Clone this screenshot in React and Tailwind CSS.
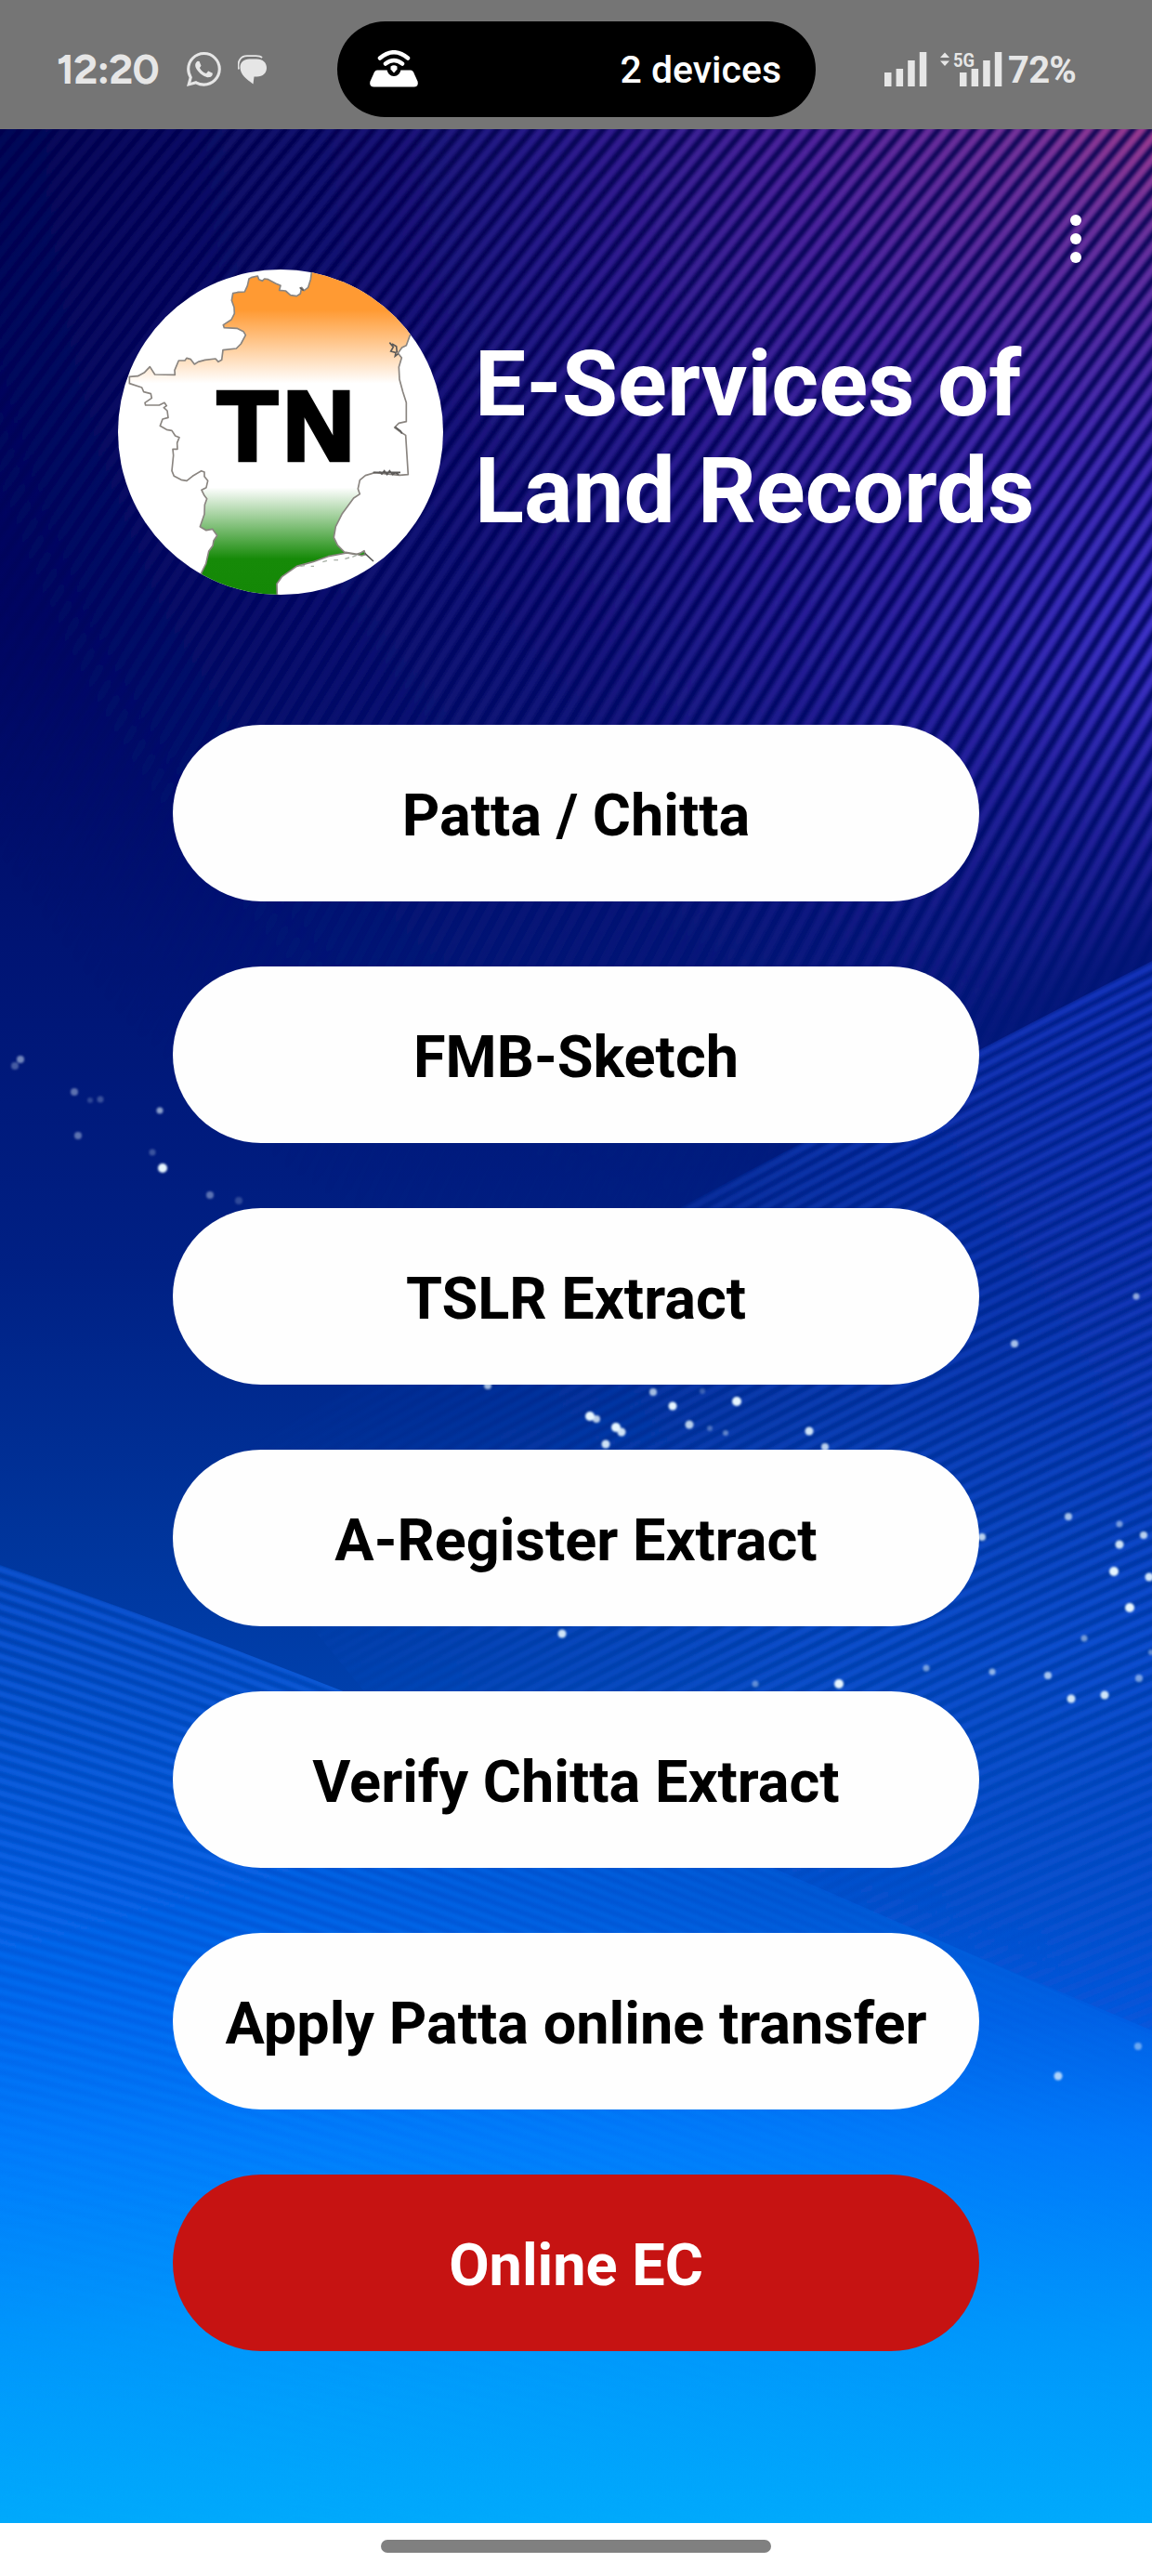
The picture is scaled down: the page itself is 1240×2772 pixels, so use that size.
import React from "react";
import { BsWhatsapp } from "react-icons/bs";

const services = [
  "Patta / Chitta",
  "FMB-Sketch",
  "TSLR Extract",
  "A-Register Extract",
  "Verify Chitta Extract",
  "Apply Patta online transfer",
];

// x, y, radius, opacity
const sparkles = [
  [703, 1498, 4, 0.7], [724, 1513, 4.5, 1], [793, 1508, 5, 1], [635, 1524, 5, 1], [642, 1527, 4, 0.8],
  [663, 1536, 5, 1], [669, 1541, 4.5, 0.9], [652, 1554, 4.5, 0.9], [742, 1533, 4.5, 0.8], [764, 1537, 3, 0.3],
  [781, 1542, 3, 0.4], [871, 1540, 4.5, 0.9], [888, 1557, 4, 0.8], [756, 1497, 3, 0.25], [1150, 1632, 4, 0.7],
  [1205, 1640, 3.5, 0.5], [1205, 1662, 4.5, 0.9], [1231, 1652, 4, 0.8], [1199, 1691, 5, 1], [1237, 1697, 4.5, 0.9],
  [1216, 1730, 5, 1], [1167, 1763, 3.5, 0.5], [1057, 1654, 4, 0.8], [605, 1758, 4.5, 0.9], [997, 1795, 3.5, 0.5],
  [1068, 1799, 3.5, 0.6], [1128, 1803, 4, 0.7], [1226, 1806, 4, 0.5], [1153, 1828, 4.5, 0.9], [1189, 1824, 4.5, 0.9],
  [903, 1812, 5, 1], [813, 1812, 3.5, 0.4], [525, 1491, 4, 0.7], [1092, 1446, 4, 0.7], [1223, 1395, 3.5, 0.6],
  [22, 1140, 4, 0.5], [16, 1147, 4, 0.3], [80, 1175, 4, 0.4], [97, 1184, 3, 0.2], [108, 1183, 3.5, 0.25],
  [172, 1195, 3.5, 0.6], [84, 1222, 4, 0.4], [164, 1240, 3.5, 0.25], [175, 1257, 5, 1], [226, 1286, 4, 0.4],
  [257, 1292, 4, 0.2], [1139, 2234, 4.5, 0.75], [1225, 2202, 4, 0.45], [1239, 1778, 3, 0.4],
];

const range = (n) => Array.from({ length: n }, (_, i) => i);

const steepLines = range(118)
  .map((i) => `M${10 + i * 19} 120 Q${-330 + i * 19} 520 ${-586 + i * 19} 1000 T${-760 + i * 19} 1400`)
  .join("");
const risingLines = range(92)
  .map((i) => `M1260 ${1030 + i * 14.6} Q840 ${1240 + i * 14.6 - i * 0.6} 200 ${1600 + i * 14.6 - i * 1.4}`)
  .join("");
const fallingLines = range(86)
  .map((i) => `M-20 ${1682 + i * 13.4} Q500 ${1855 + i * 13.4 - i * 1.2} 1260 ${2186 + i * 13.4 - i * 3}`)
  .join("");

function Backdrop() {
  return (
    <svg className="absolute inset-0 h-full w-full" viewBox="0 139 1240 2576" preserveAspectRatio="none" aria-hidden="true">
      <defs>
        <linearGradient id="base" gradientUnits="userSpaceOnUse" x1="0" y1="139" x2="0" y2="2715">
          <stop offset="0" stopColor="#00004c" />
          <stop offset="0.2" stopColor="#00065e" />
          <stop offset="0.34" stopColor="#001474" />
          <stop offset="0.475" stopColor="#002084" />
          <stop offset="0.59" stopColor="#00359c" />
          <stop offset="0.66" stopColor="#0041ae" />
          <stop offset="0.74" stopColor="#004ec8" />
          <stop offset="0.79" stopColor="#005ee4" />
          <stop offset="0.84" stopColor="#0078fa" />
          <stop offset="0.92" stopColor="#0096fb" />
          <stop offset="1" stopColor="#00aafc" />
        </linearGradient>
        <radialGradient id="steep" gradientUnits="userSpaceOnUse" cx="1260" cy="110" r="1500">
          <stop offset="0" stopColor="#b8408a" />
          <stop offset="0.1" stopColor="#80349a" />
          <stop offset="0.26" stopColor="#50249e" />
          <stop offset="0.45" stopColor="#33219c" stopOpacity="0.8" />
          <stop offset="0.62" stopColor="#22208e" stopOpacity="0.55" />
          <stop offset="0.8" stopColor="#141c80" stopOpacity="0.3" />
          <stop offset="1" stopColor="#101878" stopOpacity="0" />
        </radialGradient>
        <radialGradient id="violet" gradientUnits="userSpaceOnUse" cx="1260" cy="680" r="620">
          <stop offset="0" stopColor="#4038d4" stopOpacity="0.85" />
          <stop offset="0.5" stopColor="#2c28b4" stopOpacity="0.4" />
          <stop offset="1" stopColor="#2020a0" stopOpacity="0" />
        </radialGradient>
        <linearGradient id="fadeSteep" gradientUnits="userSpaceOnUse" x1="0" y1="139" x2="0" y2="1340">
          <stop offset="0" stopColor="#fff" />
          <stop offset="0.5" stopColor="#fff" />
          <stop offset="0.72" stopColor="#fff" stopOpacity="0.75" />
          <stop offset="1" stopColor="#fff" stopOpacity="0" />
        </linearGradient>
        <mask id="maskSteep" maskUnits="userSpaceOnUse" x="0" y="100" width="1240" height="1400">
          <rect x="0" y="100" width="1240" height="1400" fill="url(#fadeSteep)" />
          <path d="M1300 960 L780 1300 L780 1500 L1300 1500Z" fill="#000" filter="url(#edge)" />
        </mask>
        <filter id="edge" x="-20%" y="-20%" width="140%" height="140%"><feGaussianBlur stdDeviation="35" /></filter>
        <linearGradient id="rising" gradientUnits="userSpaceOnUse" x1="1240" y1="1200" x2="420" y2="1700">
          <stop offset="0" stopColor="#1c3ccc" stopOpacity="0.8" />
          <stop offset="0.5" stopColor="#1450d0" stopOpacity="0.4" />
          <stop offset="1" stopColor="#1050d0" stopOpacity="0.1" />
        </linearGradient>
        <linearGradient id="risingLow" gradientUnits="userSpaceOnUse" x1="0" y1="1400" x2="0" y2="2150">
          <stop offset="0" stopColor="#1060f0" stopOpacity="0" />
          <stop offset="0.5" stopColor="#1064f4" stopOpacity="0.4" />
          <stop offset="1" stopColor="#1070f4" stopOpacity="0" />
        </linearGradient>
        <linearGradient id="risingFill" gradientUnits="userSpaceOnUse" x1="1240" y1="1500" x2="640" y2="1700">
          <stop offset="0" stopColor="#0030b8" stopOpacity="0.2" />
          <stop offset="1" stopColor="#0034b8" stopOpacity="0" />
        </linearGradient>
        <linearGradient id="fadeRising" gradientUnits="userSpaceOnUse" x1="260" y1="0" x2="860" y2="0">
          <stop offset="0" stopColor="#fff" stopOpacity="0" />
          <stop offset="0.5" stopColor="#fff" stopOpacity="0.6" />
          <stop offset="1" stopColor="#fff" />
        </linearGradient>
        <mask id="maskRising" maskUnits="userSpaceOnUse" x="0" y="1000" width="1240" height="1200">
          <path d="M1240 1034 Q840 1238 200 1585 L400 1830 L1240 2185Z" fill="url(#fadeRising)" />
        </mask>
        <linearGradient id="falling" gradientUnits="userSpaceOnUse" x1="100" y1="1700" x2="350" y2="2600">
          <stop offset="0" stopColor="#1068f4" stopOpacity="0.6" />
          <stop offset="0.5" stopColor="#0c7cff" stopOpacity="0.5" />
          <stop offset="1" stopColor="#08a4ff" stopOpacity="0.25" />
        </linearGradient>
        <linearGradient id="fallingFill" gradientUnits="userSpaceOnUse" x1="0" y1="1690" x2="0" y2="2400">
          <stop offset="0" stopColor="#0044c4" stopOpacity="0.15" />
          <stop offset="0.5" stopColor="#0060f0" stopOpacity="0.28" />
          <stop offset="1" stopColor="#0088ff" stopOpacity="0" />
        </linearGradient>
        <linearGradient id="fadeFalling" gradientUnits="userSpaceOnUse" x1="300" y1="0" x2="1240" y2="0">
          <stop offset="0" stopColor="#fff" />
          <stop offset="1" stopColor="#fff" stopOpacity="0.2" />
        </linearGradient>
        <mask id="maskFalling" maskUnits="userSpaceOnUse" x="0" y="1600" width="1240" height="1200">
          <path d="M0 1684 Q500 1855 1240 2190 V2715 H0Z" fill="url(#fadeFalling)" />
        </mask>
        <filter id="soft" x="-5%" y="-5%" width="110%" height="110%"><feGaussianBlur stdDeviation="1.9" /></filter>
        <filter id="glow" x="-5%" y="-5%" width="110%" height="110%"><feGaussianBlur stdDeviation="1.3" /></filter>
      </defs>
      <rect x="0" y="139" width="1240" height="2576" fill="url(#base)" />
      <g mask="url(#maskSteep)" fill="none" strokeWidth="9" filter="url(#soft)">
        <path d={steepLines} stroke="url(#steep)" />
        <path d={steepLines} stroke="url(#violet)" />
      </g>
      <g mask="url(#maskRising)">
        <rect x="0" y="1000" width="1240" height="1200" fill="url(#risingFill)" />
        <g fill="none" strokeWidth="7" filter="url(#soft)">
          <path d={risingLines} stroke="url(#rising)" />
          <path d={risingLines} stroke="url(#risingLow)" />
        </g>
      </g>
      <g mask="url(#maskFalling)">
        <rect x="0" y="1680" width="1240" height="1040" fill="url(#fallingFill)" />
        <path d={fallingLines} fill="none" stroke="url(#falling)" strokeWidth="6.5" filter="url(#soft)" />
      </g>
      <g filter="url(#glow)" fill="#e6f6ff">
        {sparkles.map(([x, y, r, o], i) => <circle key={i} cx={x} cy={y} r={r} opacity={o} />)}
      </g>
    </svg>
  );
}

function Logo() {
  return (
    <svg className="size-[350px] shrink-0" viewBox="81 60 1050 1050" role="img" aria-label="TN map">
      <defs>
        <linearGradient id="flag" gradientUnits="userSpaceOnUse" x1="0" y1="60" x2="0" y2="1110">
          <stop offset="0" stopColor="#ff9a33" />
          <stop offset="0.125" stopColor="#ff9a33" />
          <stop offset="0.35" stopColor="#fff" />
          <stop offset="0.67" stopColor="#fff" />
          <stop offset="0.89" stopColor="#168a08" />
          <stop offset="1" stopColor="#148806" />
        </linearGradient>
        <clipPath id="disc"><circle cx="606" cy="585" r="525" /></clipPath>
      </defs>
      <circle cx="606" cy="585" r="525" fill="#fff" />
      <g clipPath="url(#disc)">
        <path
          d="M710 40 L703 92 L695 118 L682 128 L674 118 L670 138 L658 146 L638 143 L622 129 L602 127 L606 112 L590 105 L566 92 L554 90 L547 97 L536 92 L532 81 L514 85 L504 90 L499 112 L490 132 L470 133 L452 137 L448 160 L456 182 L457 202 L447 222 L421 239 L424 248 L465 250 L486 260 L493 272 L478 300 L463 315 L420 320 L416 352 L405 358 L396 348 L362 352 L340 358 L328 366 L316 350 L303 346 L297 354 L277 354 L264 385 L265 400 L200 399 L184 374 L167 392 L145 404 L118 406 L118 428 L158 441 L164 455 L187 461 L190 475 L168 490 L170 498 L214 498 L231 490 L238 500 L229 506 L240 516 L243 538 L225 543 L217 565 L238 577 L255 580 L266 597 L279 602 L272 620 L273 640 L258 640 L260 660 L255 710 L262 727 L285 739 L303 742 L322 727 L350 710 L360 714 L360 728 L371 742 L366 764 L351 772 L360 790 L368 800 L361 820 L360 850 L346 890 L366 902 L386 898 L401 919 L390 935 L387 952 L374 970 L365 1010 L350 1040 L350 1150 L596 1150 L594 1075 L610 1052 L658 1018 L710 1004 L760 986 L820 975 L848 980 L866 974 L876 968 L880 980 L868 984 L848 978 L812 972 L790 950 L778 925 L784 890 L804 850 L842 798 L862 785 L856 768 L862 740 L880 725 L910 716 L990 724 L1018 722 L1010 595 L994 585 L974 570 L988 556 L1012 551 L1012 490 L1001 455 L990 415 L988 375 L997 345 L985 330 L998 312 L1012 305 L1024 272 L1080 220 L1080 20Z"
          fill="url(#flag)" stroke="#8a8580" strokeWidth="5" strokeLinejoin="round"
        />
        <path d="M905 715h88M925 712l8 8 8-10 9 12 8-12 10 12 8-6 12 6M958 296l12 14-8 14 16 4-2 12 10-8M966 300l14 8 2 20M976 568l18 14 4 8M878 976l28 26M668 118l12 10" fill="none" stroke="#5c5a58" strokeWidth="5" />
        <path d="M670 1018l14-2m20 2h10m28-14l14-4m22-2h14m22-4l14-4m10-2l14-6" fill="none" stroke="#a8b0a6" strokeWidth="4" />
        <text x="402 614" y="675" strokeWidth="14" className="fill-black stroke-black text-[318px] font-bold [font-family:'Liberation_Sans',sans-serif]">TN</text>
      </g>
    </svg>
  );
}

function StatusBar() {
  return (
    <header className="flex h-[139px] items-center bg-[#757575] pb-px text-[#e6e6e6]">
      <div className="flex w-[363px] items-center pt-[11px] pl-[61px]">
        <span className="w-[140px] text-[45px] leading-none font-bold tracking-[-0.8px] [font-family:Figtree,Lato,sans-serif]">12:20</span>
        <BsWhatsapp className="size-[37px]" />
        <svg className="ml-[18px] h-[32px] w-[32px]" viewBox="0 0 32 32" fill="currentColor">
          <path d="M12.500 4.500H20C27 4.500 31 8.500 31 14s-4 9.500-10.500 9.500H17.500L16.500 31.500C10 26.500 2.500 21.500 2.500 13.500C2.500 8 6.500 4.500 12.500 4.500Z" />
          <path d="M1 15.500C-1 7 3 1.200 10 1.200h9.500c3 0 5.500.8 6.500 2" fill="none" stroke="currentColor" strokeWidth="1.800" />
        </svg>
      </div>
      <div className="mt-[10px] flex h-[103px] w-[515px] items-center justify-between rounded-full bg-black pr-[37px] pl-[35px] text-white">
        <svg className="h-[40px] w-[52px]" viewBox="0 0 52 40">
          <path d="M8 21.500h36q2 0 3 2l4.500 10q1.500 6-4 6h-43q-5.500 0-4-6l4.500-10q1-2 3-2Z" fill="currentColor" />
          <circle cx="26" cy="20.500" r="7.500" fill="#000" />
          <path d="M22.500 17.500q3.500-2.500 7 0v3L26 24.500l-3.500-4Z" fill="currentColor" />
          <path d="M11 8.500q15-12.500 30 0M17 14.500q9-7 18 0" fill="none" stroke="currentColor" strokeWidth="4.500" strokeLinecap="round" />
        </svg>
        <span className="pt-[2px] text-[41px] leading-none font-medium [font-family:Roboto,sans-serif]">2 devices</span>
      </div>
      <div className="flex flex-1 items-center pt-[11px] pl-[74px]">
        <svg className="h-[38px] w-[127px] overflow-visible" viewBox="0 0 127 38" fill="currentColor">
          <path d="M0 22h7.500v15H0zM12.600 18h7.500v19h-7.500zM25.200 9h7.500v28h-7.500zM37.800 0h7.500v37h-7.500zM81 22h7.500v15H81zM93.600 18h7.500v19h-7.500zM106.200 9h7.500v28h-7.500zM118.800 0h7.500v37h-7.500z" />
          <path d="M60 6l5-5.500L70 6zM60 9.500h10L65 15z" />
          <text x="74" y="15.500" textLength="23" lengthAdjust="spacingAndGlyphs" className="text-[21px] font-bold [font-family:Roboto,sans-serif]">5G</text>
        </svg>
        <span className="ml-[6px] pt-[2px] text-[40px] leading-none font-bold tracking-[-0.8px] [font-family:Roboto,sans-serif]">72%</span>
      </div>
    </header>
  );
}

export default function App() {
  return (
    <div className="flex h-[2772px] w-[1240px] flex-col overflow-hidden bg-white [font-family:Roboto,sans-serif]">
      <StatusBar />
      <main className="relative flex h-[2576px] flex-col">
        <Backdrop />
        <div className="relative flex justify-end pt-[92px] pr-[76px]">
          <button className="flex flex-col gap-[8px]" aria-label="More options">
            <span className="size-[12px] rounded-full bg-white" />
            <span className="size-[12px] rounded-full bg-white" />
            <span className="size-[12px] rounded-full bg-white" />
          </button>
        </div>
        <div className="relative mt-[7px] flex items-center pl-[127px]">
          <Logo />
          <h1 className="mt-[11px] ml-[34px] text-[98px] leading-[115px] font-bold whitespace-nowrap text-white">
            E-Services of<br />Land Records
          </h1>
        </div>
        <nav className="relative mx-auto mt-[140px] flex w-[868px] flex-col gap-[70px]">
          {services.map((name) => (
            <button key={name} className="h-[190px] rounded-full bg-[#fefefe] pt-[6px] text-[63px] font-bold whitespace-nowrap text-black">{name}</button>
          ))}
          <button className="h-[190px] rounded-full bg-[#c61312] pt-[6px] text-[63px] font-bold whitespace-nowrap text-white">Online EC</button>
        </nav>
      </main>
      <footer className="flex h-[57px] justify-center bg-white pt-[18px]">
        <div className="h-[14px] w-[420px] rounded-full bg-[#808080]" />
      </footer>
    </div>
  );
}
